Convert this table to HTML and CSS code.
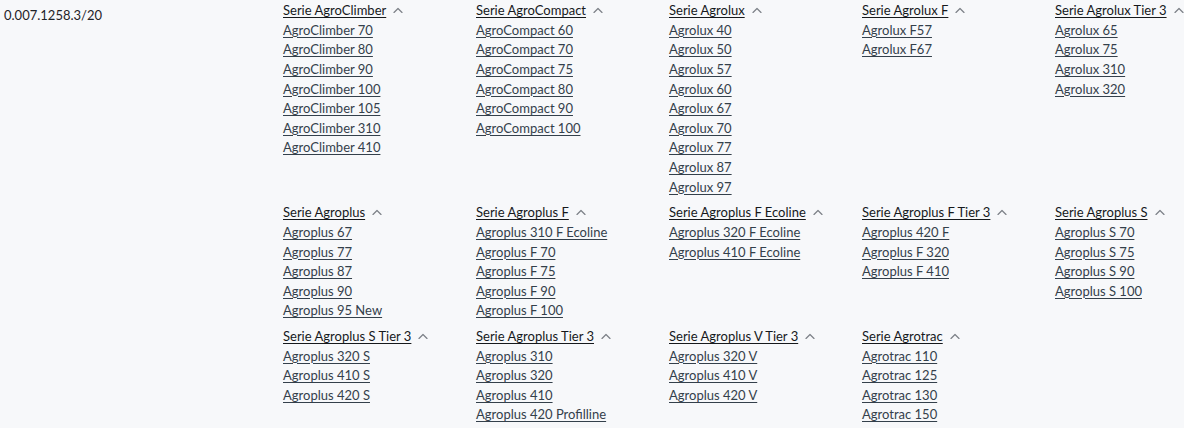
FILE: index.html
```html
<!DOCTYPE html>
<html lang="de">
<head>
<meta charset="utf-8">
<title>Serien</title>
<link rel="stylesheet" href="styles.css">
</head>
<body>
<div class="row">
  <div class="code">0.007.1258.3/20</div>
  <div class="series-grid">
    <div class="series">
      <a class="series-title" href="#"><span>Serie AgroClimber</span><svg class="chev" viewBox="0 0 10 6"><polyline points="1,5.5 5,1.5 9,5.5"/></svg></a>
      <a href="#">AgroClimber 70</a><a href="#">AgroClimber 80</a><a href="#">AgroClimber 90</a><a href="#">AgroClimber 100</a><a href="#">AgroClimber 105</a><a href="#">AgroClimber 310</a><a href="#">AgroClimber 410</a>
    </div>
    <div class="series">
      <a class="series-title" href="#"><span>Serie AgroCompact</span><svg class="chev" viewBox="0 0 10 6"><polyline points="1,5.5 5,1.5 9,5.5"/></svg></a>
      <a href="#">AgroCompact 60</a><a href="#">AgroCompact 70</a><a href="#">AgroCompact 75</a><a href="#">AgroCompact 80</a><a href="#">AgroCompact 90</a><a href="#">AgroCompact 100</a>
    </div>
    <div class="series">
      <a class="series-title" href="#"><span>Serie Agrolux</span><svg class="chev" viewBox="0 0 10 6"><polyline points="1,5.5 5,1.5 9,5.5"/></svg></a>
      <a href="#">Agrolux 40</a><a href="#">Agrolux 50</a><a href="#">Agrolux 57</a><a href="#">Agrolux 60</a><a href="#">Agrolux 67</a><a href="#">Agrolux 70</a><a href="#">Agrolux 77</a><a href="#">Agrolux 87</a><a href="#">Agrolux 97</a>
    </div>
    <div class="series">
      <a class="series-title" href="#"><span>Serie Agrolux F</span><svg class="chev" viewBox="0 0 10 6"><polyline points="1,5.5 5,1.5 9,5.5"/></svg></a>
      <a href="#">Agrolux F57</a><a href="#">Agrolux F67</a>
    </div>
    <div class="series">
      <a class="series-title" href="#"><span>Serie Agrolux Tier 3</span><svg class="chev" viewBox="0 0 10 6"><polyline points="1,5.5 5,1.5 9,5.5"/></svg></a>
      <a href="#">Agrolux 65</a><a href="#">Agrolux 75</a><a href="#">Agrolux 310</a><a href="#">Agrolux 320</a>
    </div>

    <div class="series">
      <a class="series-title" href="#"><span>Serie Agroplus</span><svg class="chev" viewBox="0 0 10 6"><polyline points="1,5.5 5,1.5 9,5.5"/></svg></a>
      <a href="#">Agroplus 67</a><a href="#">Agroplus 77</a><a href="#">Agroplus 87</a><a href="#">Agroplus 90</a><a href="#">Agroplus 95 New</a>
    </div>
    <div class="series">
      <a class="series-title" href="#"><span>Serie Agroplus F</span><svg class="chev" viewBox="0 0 10 6"><polyline points="1,5.5 5,1.5 9,5.5"/></svg></a>
      <a href="#">Agroplus 310 F Ecoline</a><a href="#">Agroplus F 70</a><a href="#">Agroplus F 75</a><a href="#">Agroplus F 90</a><a href="#">Agroplus F 100</a>
    </div>
    <div class="series">
      <a class="series-title" href="#"><span>Serie Agroplus F Ecoline</span><svg class="chev" viewBox="0 0 10 6"><polyline points="1,5.5 5,1.5 9,5.5"/></svg></a>
      <a href="#">Agroplus 320 F Ecoline</a><a href="#">Agroplus 410 F Ecoline</a>
    </div>
    <div class="series">
      <a class="series-title" href="#"><span>Serie Agroplus F Tier 3</span><svg class="chev" viewBox="0 0 10 6"><polyline points="1,5.5 5,1.5 9,5.5"/></svg></a>
      <a href="#">Agroplus 420 F</a><a href="#">Agroplus F 320</a><a href="#">Agroplus F 410</a>
    </div>
    <div class="series">
      <a class="series-title" href="#"><span>Serie Agroplus S</span><svg class="chev" viewBox="0 0 10 6"><polyline points="1,5.5 5,1.5 9,5.5"/></svg></a>
      <a href="#">Agroplus S 70</a><a href="#">Agroplus S 75</a><a href="#">Agroplus S 90</a><a href="#">Agroplus S 100</a>
    </div>

    <div class="series">
      <a class="series-title" href="#"><span>Serie Agroplus S Tier 3</span><svg class="chev" viewBox="0 0 10 6"><polyline points="1,5.5 5,1.5 9,5.5"/></svg></a>
      <a href="#">Agroplus 320 S</a><a href="#">Agroplus 410 S</a><a href="#">Agroplus 420 S</a>
    </div>
    <div class="series">
      <a class="series-title" href="#"><span>Serie Agroplus Tier 3</span><svg class="chev" viewBox="0 0 10 6"><polyline points="1,5.5 5,1.5 9,5.5"/></svg></a>
      <a href="#">Agroplus 310</a><a href="#">Agroplus 320</a><a href="#">Agroplus 410</a><a href="#">Agroplus 420 Profilline</a>
    </div>
    <div class="series">
      <a class="series-title" href="#"><span>Serie Agroplus V Tier 3</span><svg class="chev" viewBox="0 0 10 6"><polyline points="1,5.5 5,1.5 9,5.5"/></svg></a>
      <a href="#">Agroplus 320 V</a><a href="#">Agroplus 410 V</a><a href="#">Agroplus 420 V</a>
    </div>
    <div class="series">
      <a class="series-title" href="#"><span>Serie Agrotrac</span><svg class="chev" viewBox="0 0 10 6"><polyline points="1,5.5 5,1.5 9,5.5"/></svg></a>
      <a href="#">Agrotrac 110</a><a href="#">Agrotrac 125</a><a href="#">Agrotrac 130</a><a href="#">Agrotrac 150</a>
    </div>
  </div>
</div>
</body>
</html>
```
FILE: styles.css
```css
html, body {
  margin: 0;
  padding: 0;
  background: #f7f8fa;
}
body {
  font-family: Lato, "Noto Sans", "Liberation Sans", sans-serif;
  font-size: 13px;
  line-height: 1.5;
  color: #222;
}
.row {
  display: flex;
  align-items: flex-start;
}
.code {
  flex: none;
  width: 279px;
  padding: 5px 0 0 4px;
  line-height: 20px;
  color: #1f2328;
}
.series-grid {
  flex: 1;
  min-width: 0;
  display: grid;
  grid-template-columns: repeat(4, 193px) 1fr;
  row-gap: 5px;
}
.series {
  display: flex;
  flex-direction: column;
  align-items: flex-start;
}
.series a {
  color: #34404b;
  text-decoration: underline;
  text-decoration-thickness: 1px;
  text-underline-offset: 2px;
  line-height: 19.6px;
  white-space: nowrap;
}
.series a.series-title {
  color: #16191c;
  text-decoration: none;
  line-height: 20px;
  margin-bottom: 0.8px;
  display: inline-flex;
  align-items: center;
  gap: 7px;
}
.series-title span {
  text-decoration: underline;
  text-decoration-thickness: 1px;
  text-underline-offset: 2px;
}
.chev {
  width: 10px;
  height: 6px;
  fill: none;
  stroke: #7d8187;
  stroke-width: 1.2;
  stroke-linecap: round;
  stroke-linejoin: round;
}
```
